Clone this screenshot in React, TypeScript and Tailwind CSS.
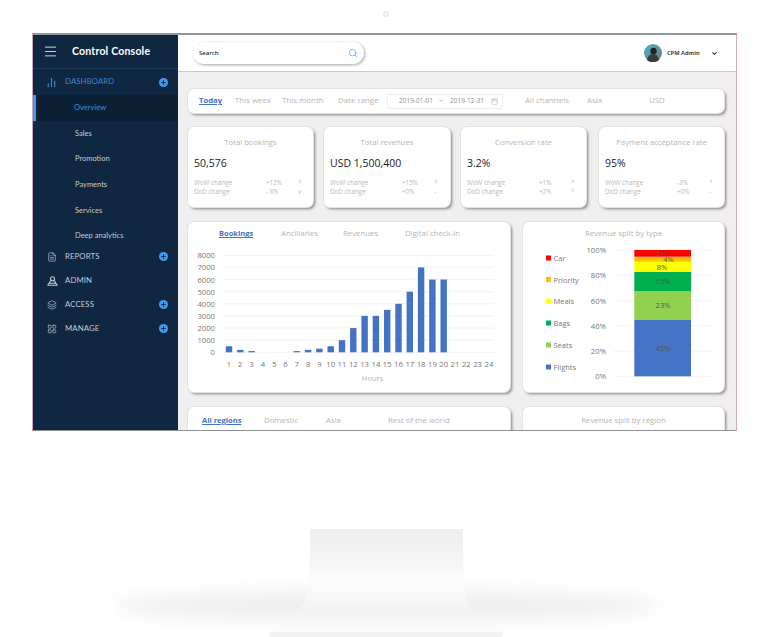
import { Calendar, ChartNoAxesColumn, ChevronDown, FileText, Layers, LayoutGrid, Menu, Search } from "lucide-react"
import type { ReactNode } from "react"

const subItems = ["Overview", "Sales", "Promotion", "Payments", "Services", "Deep analytics"]

const cards = [
  { title: "Total bookings", value: "50,576", wow: "+12%", dod: "- 8%", wowMark: "^", dodMark: "v", width: "w-[125px]" },
  { title: "Total revenues", value: "USD 1,500,400", wow: "+15%", dod: "+0%", wowMark: "^", dodMark: "-", width: "w-[126px]" },
  { title: "Conversion rate", value: "3.2%", wow: "+1%", dod: "+2%", wowMark: "^", dodMark: "^", width: "w-[125px]" },
  { title: "Payment acceptance rate", value: "95%", wow: "-3%", dod: "+0%", wowMark: "^", dodMark: "-", width: "ml-[2px] w-[125px]" },
]

const hours = [500, 200, 100, 0, 0, 0, 100, 200, 300, 500, 1000, 2000, 3000, 3000, 3500, 4000, 5000, 7000, 6000, 6000, 0, 0, 0, 0]

const segments = [
  { label: "45%", top: 320, bottom: 376.3, fill: "#4472c4", x: 663, y: 351 },
  { label: "23%", top: 291, bottom: 320, fill: "#92d050", x: 663, y: 308 },
  { label: "15%", top: 271.7, bottom: 291, fill: "#00b050", x: 663, y: 284 },
  { label: "8%", top: 261.7, bottom: 271.7, fill: "#ffff00", x: 662, y: 270 },
  { label: "4%", top: 256.7, bottom: 261.7, fill: "#ffc000", x: 668.5, y: 262 },
  { label: "5%", top: 250, bottom: 256.7, fill: "#ff0000", x: 662, y: 256 },
]

const legend = [
  { label: "Car", fill: "#ff0000", y: 258 },
  { label: "Priority", fill: "#ffc000", y: 279.5 },
  { label: "Meals", fill: "#ffff00", y: 301 },
  { label: "Bags", fill: "#00b050", y: 323 },
  { label: "Seats", fill: "#92d050", y: 345 },
  { label: "Flights", fill: "#4472c4", y: 367 },
]

function PlusDot() {
  return (
    <span className="flex h-[9px] w-[9px] items-center justify-center rounded-full bg-[#3f9bf0]">
      <svg width="5" height="5" viewBox="0 0 5 5">
        <path d="M2.5 0.3v4.4M0.3 2.5h4.4" stroke="#0f2740" strokeWidth="1" />
      </svg>
    </span>
  )
}

function AdminIcon() {
  return (
    <svg width="11" height="10" viewBox="0 0 11 10" fill="none" stroke="currentColor" strokeWidth="1.1">
      <circle cx="5.5" cy="2.7" r="2" />
      <path d="M3.6 4.6 2.2 7.2M7.4 4.6l1.4 2.6M1 9.2c0-1.4 1-2 2.2-2h4.6c1.2 0 2.2.6 2.2 2z" />
    </svg>
  )
}

function NavRow({ icon, label, plus }: { icon: ReactNode; label: string; plus?: boolean }) {
  return (
    <div className="flex h-[24px] items-center pl-[14px] pr-[10px] text-[7.8px] tracking-[0.1px] text-[#c3cbd3]">
      <span className="flex w-[18px] items-center">{icon}</span>
      <span className="flex-1">{label}</span>
      {plus && <PlusDot />}
    </div>
  )
}

function Sidebar() {
  return (
    <aside className="w-[145px] shrink-0 bg-[#0f2740] font-['Lato',sans-serif]">
      <div className="flex h-[34px] items-center border-b border-[#1a3a5a] pl-[10px] text-white">
        <Menu size={15} strokeWidth={1.3} />
        <span className="ml-[14px] text-[10.5px] font-bold tracking-[0.2px]">Control Console</span>
      </div>
      <div className="flex h-[26px] items-center pl-[13px] pr-[10px] text-[7.8px] tracking-[0.1px] text-[#3a86d0]">
        <ChartNoAxesColumn size={11} strokeWidth={2.6} />
        <span className="ml-[8px] flex-1">DASHBOARD</span>
        <PlusDot />
      </div>
      <div className="-mb-[3.6px]">
        {subItems.map((item, i) => (
          <div
            key={item}
            className={
              i === 0
                ? "flex h-[25.6px] items-center border-l-[3px] border-[#3f9bf0] bg-[#0c2136] pl-[38px] text-[7.5px] font-medium text-[#3a86d0]"
                : "flex h-[25.6px] items-center pl-[42px] text-[7.5px] text-[#c3cbd3]"
            }
          >
            {item}
          </div>
        ))}
      </div>
      <NavRow icon={<FileText size={10} strokeWidth={1.5} />} label="REPORTS" plus />
      <NavRow icon={<AdminIcon />} label="ADMIN" />
      <NavRow icon={<Layers size={10} strokeWidth={1.5} />} label="ACCESS" plus />
      <NavRow icon={<LayoutGrid size={10} strokeWidth={1.5} />} label="MANAGE" plus />
    </aside>
  )
}

function Header() {
  return (
    <header className="flex h-[37px] items-center border-b border-[#c9c9c9] bg-white pl-[15px] pr-[18px]">
      <div className="flex h-[22px] w-[171px] items-center justify-between rounded-full bg-white pl-[6px] pr-[6px] text-[6px] font-semibold text-[#333] shadow-[1px_1px_3px_rgba(0,0,0,0.35)]">
        <span>Search</span>
        <Search size={10} strokeWidth={1.6} className="text-[#4a9be8]" />
      </div>
      <div className="ml-auto flex items-center">
        <svg width="18" height="18" viewBox="0 0 18 18">
          <defs>
            <linearGradient id="avatarBg" x1="0" y1="0" x2="1" y2="1">
              <stop offset="0" stopColor="#3fb6c6" />
              <stop offset="1" stopColor="#77787c" />
            </linearGradient>
          </defs>
          <circle cx="9" cy="9" r="9" fill="url(#avatarBg)" />
          <circle cx="9.5" cy="7" r="3.2" fill="#26221f" />
          <path d="M3 16c1-5 4-6 6-6s5 1 6 6a9 9 0 0 1-12 0z" fill="#3a3a3c" />
        </svg>
        <span className="ml-[5px] w-[42px] text-[5.7px] font-bold text-[#444]">CPM Admin</span>
        <ChevronDown size={7} strokeWidth={3.5} className="ml-[2px] text-[#333]" />
      </div>
    </header>
  )
}

function Toolbar() {
  return (
    <div className="flex h-[24px] items-center rounded-md bg-white pl-[11px] text-[7.9px] text-[#b5b5b5] shadow-[0_0_0_1px_#e2e2e2,2px_2px_3px_rgba(0,0,0,0.45)]">
      <span className="w-[36px] text-[7.7px] font-bold text-[#4472c4] underline">Today</span>
      <span className="w-[47px]">This week</span>
      <span className="w-[56px]">This month</span>
      <span className="w-[49px]">Date range</span>
      <div className="flex h-[15px] w-[116px] items-center rounded-[1px] border border-[#eeeeee] pl-[11px] text-[6.5px] text-[#8f8f8f]">
        <span className="w-[40px]">2019-01-01</span>
        <span className="w-[11px]">~</span>
        <span className="w-[41px]">2019-12-31</span>
        <Calendar size={7} strokeWidth={1.2} />
      </div>
      <span className="ml-[22px] w-[62px]">All channels</span>
      <span className="w-[62px]">Asia</span>
      <span>USD</span>
    </div>
  )
}

function StatCard({ title, value, wow, dod, wowMark, dodMark, width }: (typeof cards)[number]) {
  return (
    <div className={`h-[80px] rounded-md bg-white px-[6px] pt-[10px] shadow-[0_0_0_1px_#e2e2e2,2px_2px_3px_rgba(0,0,0,0.45)] ${width}`}>
      <div className="text-center text-[7.7px] leading-[11px] text-[#b5b5b5]">{title}</div>
      <div className="mt-[7px] text-[10.5px] leading-[17px] text-[#222]">{value}</div>
      <div className="mt-[7px] grid grid-cols-[72px_32px_1fr] text-[6.3px] leading-[8.5px] text-[#b8b8b8]">
        <span>WoW change</span>
        <span>{wow}</span>
        <span>{wowMark}</span>
        <span>DoD change</span>
        <span>{dod}</span>
        <span>{dodMark}</span>
      </div>
    </div>
  )
}

function BarChart() {
  const y = (v: number) => 352.3 - (v / 8000) * 97
  return (
    <svg width="322" height="146" viewBox="188 246 322 146" className="block">
      {[0, 1000, 2000, 3000, 4000, 5000, 6000, 7000, 8000].map((v) => (
        <g key={v}>
          <line x1="223" x2="494" y1={y(v)} y2={y(v)} stroke="#eeeeee" strokeWidth="0.8" />
          <text x="215" y={y(v) + 3} textAnchor="end" fontSize="7.7" fill="#777">
            {v}
          </text>
        </g>
      ))}
      {hours.map((v, i) => {
        const cx = 229 + i * 11.3
        return (
          <g key={i}>
            {v > 0 && <rect x={cx - 3.2} y={y(v)} width="6.4" height={352.3 - y(v)} fill="#4472c4" />}
            <text x={cx} y="367" textAnchor="middle" fontSize="7.7" fill="#777">
              {i + 1}
            </text>
          </g>
        )
      })}
      <text x="372.5" y="381" textAnchor="middle" fontSize="7.5" fill="#b5b5b5">
        Hours
      </text>
    </svg>
  )
}

function StackChart() {
  const y = (p: number) => 376.3 - (p / 100) * 126.3
  return (
    <svg width="201" height="150" viewBox="523 242 201 150" className="block">
      {legend.map((l) => (
        <g key={l.label}>
          <rect x="546" y={l.y - 2.5} width="5" height="5" fill={l.fill} />
          <text x="553.5" y={l.y + 3} fontSize="7.5" fill="#777">
            {l.label}
          </text>
        </g>
      ))}
      {[0, 20, 40, 60, 80, 100].map((p) => (
        <g key={p}>
          <line x1="614" x2="712" y1={y(p)} y2={y(p)} stroke="#eeeeee" strokeWidth="0.8" />
          <text x="606" y={y(p) + 3} textAnchor="end" fontSize="7.7" fill="#777">
            {p}%
          </text>
        </g>
      ))}
      {segments.map((s) => (
        <rect key={s.label} x="634.3" y={s.top} width="56.7" height={s.bottom - s.top} fill={s.fill} />
      ))}
      {segments.map((s) => (
        <text key={s.label} x={s.x} y={s.y} textAnchor="middle" fontSize="7.5" fill="#555">
          {s.label}
        </text>
      ))}
    </svg>
  )
}

function Panel({ children }: { children: ReactNode }) {
  return <div className="rounded-md bg-white shadow-[0_0_0_1px_#e2e2e2,2px_2px_3px_rgba(0,0,0,0.45)]">{children}</div>
}

function TabRow({ tabs, active, pad }: { tabs: string[]; active: string; pad: string }) {
  return (
    <div className={`flex items-center text-[7.8px] text-[#b5b5b5] ${pad}`}>
      {tabs.map((t) => (
        <span key={t} className={`w-[62px] whitespace-nowrap ${t === active ? "text-[7.5px] font-bold text-[#4472c4] underline" : ""}`}>
          {t}
        </span>
      ))}
    </div>
  )
}

function Main() {
  return (
    <main className="min-w-0 flex-1 overflow-hidden bg-[#efefef]">
      <Header />
      <div className="pb-[20px] pl-[10px] pr-[12px] pt-[17px]">
        <Toolbar />
        <div className="mt-[14px] flex gap-[11px]">
          {cards.map((c) => (
            <StatCard key={c.title} {...c} />
          ))}
        </div>
        <div className="mt-[15px] grid grid-cols-[322px_201px] gap-x-[13px] gap-y-[15px]">
          <Panel>
            <TabRow tabs={["Bookings", "Ancillaries", "Revenues", "Digital check-in"]} active="Bookings" pad="h-[24px] pl-[31px]" />
            <BarChart />
          </Panel>
          <Panel>
            <div className="flex h-[20px] items-center justify-center pt-[4px] text-[7.8px] text-[#b5b5b5]">Revenue split by type</div>
            <StackChart />
          </Panel>
          <Panel>
            <TabRow tabs={["All regions", "Domestic", "Asia", "Rest of the world"]} active="All regions" pad="h-[27px] pl-[14px]" />
            <div className="h-[40px]" />
          </Panel>
          <Panel>
            <div className="flex h-[27px] items-center justify-center text-[7.8px] text-[#b5b5b5]">Revenue split by region</div>
            <div className="h-[40px]" />
          </Panel>
        </div>
      </div>
    </main>
  )
}

function Stand() {
  return (
    <svg width="768" height="108" viewBox="0 529 768 108" className="mt-[98px] block">
      <defs>
        <linearGradient id="neck" x1="0" y1="0" x2="0" y2="1">
          <stop offset="0" stopColor="#eeeeee" />
          <stop offset="0.36" stopColor="#f7f7f7" />
          <stop offset="0.4" stopColor="#fbfbfb" />
          <stop offset="0.6" stopColor="#f9f9f9" />
          <stop offset="0.76" stopColor="#f3f3f3" />
          <stop offset="0.95" stopColor="#fcfcfc" />
        </linearGradient>
        <filter id="blur" x="-20%" y="-100%" width="140%" height="300%">
          <feGaussianBlur stdDeviation="9" />
        </filter>
      </defs>
      <ellipse cx="386" cy="606" rx="275" ry="15" fill="#eeeeee" filter="url(#blur)" />
      <path
        d="M310 529h153c0 36 0 58 4 72 4 12 28 24 36 30v3c0 2-2 3-4 3H273c-2 0-4-1-4-3v-3c8-6 32-18 36-30 5-14 5-36 5-72z"
        fill="url(#neck)"
      />
      <path d="M269 632c0 3 2 5 5 5h225c3 0 4-2 4-5z" fill="#f1f1f1" />
    </svg>
  )
}

export default function App() {
  return (
    <div className="h-[637px] w-[768px] overflow-hidden bg-white font-['Open_Sans',sans-serif]">
      <div className="flex h-[33px] justify-center pl-[4px] pt-[11px]">
        <span className="h-[6px] w-[6px] rounded-full border border-[#e4e4e4] bg-[#f6f6f6]" />
      </div>
      <div className="ml-[32px] flex h-[398px] w-[705px] overflow-hidden border-b border-l border-r border-t-2 border-b-[#8f8f98] border-l-[#c8a8bc] border-r-[#d9a9b8] border-t-[#8d979c]">
        <Sidebar />
        <Main />
      </div>
      <Stand />
    </div>
  )
}
